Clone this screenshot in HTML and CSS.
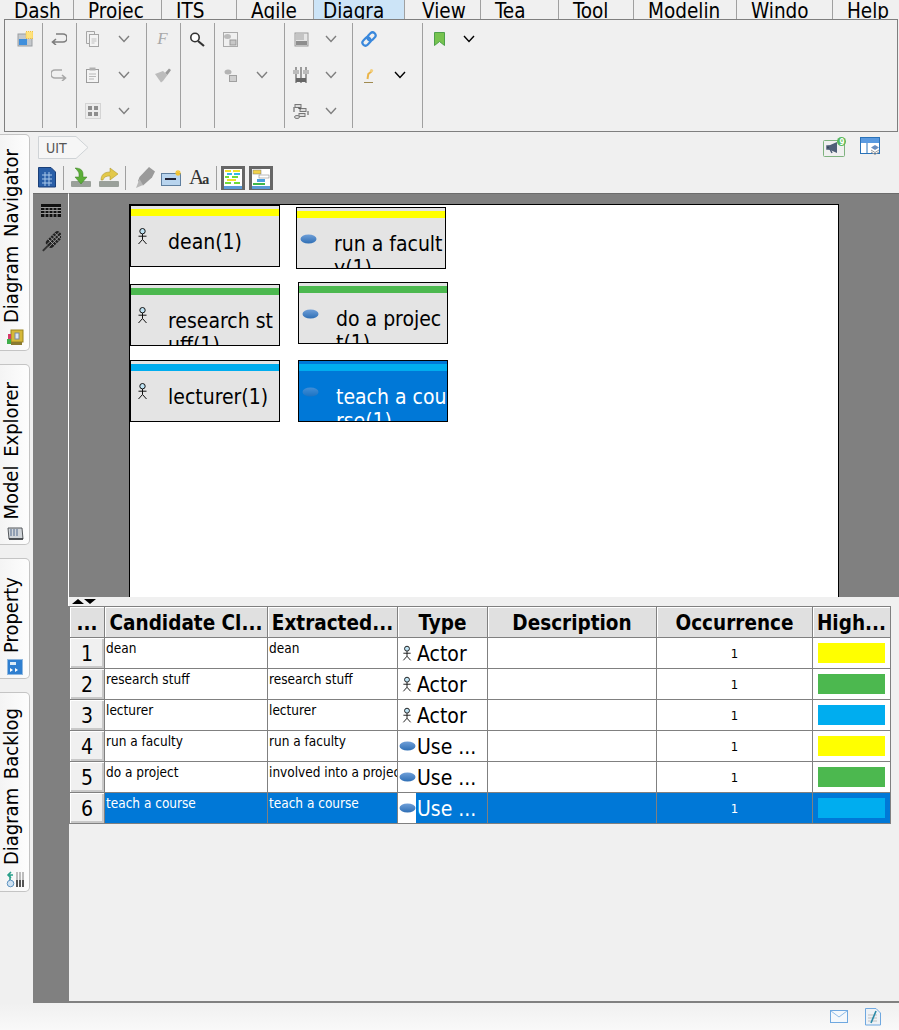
FILE: index.html
```html
<!DOCTYPE html>
<html lang="en">
<head>
  <meta charset="UTF-8">
  <title>Textual Analysis</title>
  <link rel="stylesheet" href="styles.css">
</head>
<body>
  <svg class="defs" width="0" height="0">
    <defs>
      <linearGradient id="ucFill" x1="0" y1="0" x2="0" y2="1">
        <stop offset="0" stop-color="#6f9fd8"/>
        <stop offset="1" stop-color="#2f6fb5"/>
      </linearGradient>
      <symbol id="actor" viewBox="0 0 11 17">
        <circle cx="5.5" cy="3.2" r="2.7" fill="#bfe4f5" stroke="#111"/>
        <path d="M5.5 6v5.5M1.5 8.2h8M5.5 11.5L1.5 16M5.5 11.5l4 4.5" fill="none" stroke="#111"/>
      </symbol>
      <symbol id="usecase" viewBox="0 0 17 10">
        <ellipse cx="8.5" cy="5" rx="8" ry="4.5" fill="url(#ucFill)"/>
      </symbol>
      <symbol id="chev" viewBox="0 0 12 8">
        <path d="M1 1l5 5.5L11 1" fill="none" stroke="currentColor" stroke-width="1.4"/>
      </symbol>
    </defs>
  </svg>

  <!-- menu -->
  <div class="menubar">
    <div class="menu">Dash</div>
    <div class="menu">Projec</div>
    <div class="menu">ITS</div>
    <div class="menu">Agile</div>
    <div class="menu active">Diagra</div>
    <div class="menu">View</div>
    <div class="menu">Tea</div>
    <div class="menu">Tool</div>
    <div class="menu">Modelin</div>
    <div class="menu">Windo</div>
    <div class="menu">Help</div>
  </div>

  <!-- ribbon -->
  <div class="toolbar">
    <div class="tb-group g-first">
      <div class="tb-row">
        <svg class="ico" width="16" height="16" viewBox="0 0 16 16"><rect x="1" y="3" width="14" height="12" fill="#c4c8cc" stroke="#9a9ea2"/><rect x="2" y="8" width="8" height="6" fill="#3f8fdc"/><rect x="9" y="0.5" width="7" height="7" fill="#ffe27a" stroke="#f0c040" stroke-dasharray="1 1"/></svg>
      </div>
    </div>
    <div class="tb-group g-narrow">
      <div class="tb-row">
        <svg class="ico" width="16" height="12" viewBox="0 0 16 12"><path d="M5 1H12a3.5 3.5 0 0 1 0 8H2M5 6L1.5 9 5 12" fill="none" stroke="#7d7d7d" stroke-width="1.6"/></svg>
      </div>
      <div class="tb-row">
        <svg class="ico" width="16" height="12" viewBox="0 0 16 12"><path d="M11 1H4a3.5 3.5 0 0 0 0 8H14M11 6l3.5 3L11 12" fill="none" stroke="#a8a8a8" stroke-width="1.6"/></svg>
      </div>
    </div>
    <div class="tb-group g-wide">
      <div class="tb-row">
        <svg class="ico" width="13" height="16" viewBox="0 0 13 16"><path d="M.5.500h8v3M.5.500v12h3" fill="none" stroke="#a6a6a6"/><rect x="3.5" y="3.500" width="9" height="12" fill="#f4f4f4" stroke="#a6a6a6"/><path d="M5.5 8h5M5.5 10h5M5.5 12h3" stroke="#c0c0c0"/></svg>
        <svg class="chev" width="12" height="8"><use href="#chev"/></svg>
      </div>
      <div class="tb-row">
        <svg class="ico" width="13" height="16" viewBox="0 0 13 16"><rect x=".5" y="2.500" width="12" height="13" fill="#f4f4f4" stroke="#9c9c9c"/><rect x="3.5" y=".5" width="6" height="3" fill="#b0b0b0"/><path d="M3 7h7M3 9.500h7M3 12h5" stroke="#b8b8b8"/></svg>
        <svg class="chev" width="12" height="8"><use href="#chev"/></svg>
      </div>
      <div class="tb-row">
        <svg class="ico" width="16" height="16" viewBox="0 0 16 16"><rect x=".5" y=".5" width="15" height="15" fill="#ececec" stroke="#d4d4d4"/><path d="M3 3h4v4H3zM9 3h4v4H9zM3 9h4v4H3zM9 9h4v4H9z" fill="#8e8e8e"/></svg>
        <svg class="chev" width="12" height="8"><use href="#chev"/></svg>
      </div>
    </div>
    <div class="tb-group g-narrow">
      <div class="tb-row"><span class="ico font-f">F</span></div>
      <div class="tb-row">
        <svg class="ico" width="16" height="15" viewBox="0 0 16 15"><path d="M10 5l4-4.500L16 2l-3.500 5z" fill="#9a9a9a"/><path d="M0 6l6 8.500 2-1.500 4.500-6L8 3z" fill="#bcbcbc"/></svg>
      </div>
    </div>
    <div class="tb-group g-narrow">
      <div class="tb-row">
        <svg class="ico" width="16" height="15" viewBox="0 0 16 15"><circle cx="6" cy="5.500" r="4.200" fill="#fff" stroke="#333" stroke-width="1.600"/><path d="M9 9l6 5" stroke="#333" stroke-width="2.200"/></svg>
      </div>
    </div>
    <div class="tb-group g-wide">
      <div class="tb-row">
        <svg class="ico" width="15" height="15" viewBox="0 0 15 15"><rect x=".5" y=".5" width="14" height="14" fill="none" stroke="#666" stroke-dasharray="1 1"/><ellipse cx="4.500" cy="4.500" rx="3.500" ry="2.500" fill="#bbb"/><rect x="7" y="8" width="6" height="5" fill="#c8c8c8" stroke="#999"/></svg>
      </div>
      <div class="tb-row">
        <svg class="ico" width="13" height="13" viewBox="0 0 13 13"><ellipse cx="4" cy="3" rx="3.500" ry="2.500" fill="#b4b4b4"/><rect x="5.500" y="6.500" width="7" height="6" fill="#cfcfcf" stroke="#a0a0a0"/></svg>
        <svg class="chev" width="12" height="8"><use href="#chev"/></svg>
      </div>
    </div>
    <div class="tb-group g-mid">
      <div class="tb-row">
        <svg class="ico" width="15" height="15" viewBox="0 0 15 15"><rect x="1" y="1" width="13" height="13" fill="#e6e6e6" stroke="#9a9a9a"/><rect x="2" y="2" width="8" height="6" fill="#c4c4c4"/><rect x="2" y="9" width="11" height="4" fill="#8e8e8e"/></svg>
        <svg class="chev" width="12" height="8"><use href="#chev"/></svg>
      </div>
      <div class="tb-row">
        <svg class="ico" width="16" height="16" viewBox="0 0 16 16"><path d="M3 0v16M8 0v16M13 0v16" stroke="#777" stroke-width="1.400"/><rect x="0" y="3" width="6" height="4" fill="#bbb"/><rect x="10" y="3" width="6" height="4" fill="#bbb"/><rect x="3" y="11" width="10" height="4" fill="#666"/></svg>
        <svg class="chev" width="12" height="8"><use href="#chev"/></svg>
      </div>
      <div class="tb-row">
        <svg class="ico" width="16" height="15" viewBox="0 0 16 15"><rect x="2" y=".5" width="6" height="3" fill="#ddd" stroke="#777"/><rect x="7" y="4.500" width="6" height="3" fill="#ddd" stroke="#777"/><rect x="6" y="9.500" width="6" height="3" fill="#ddd" stroke="#777"/><ellipse cx="4" cy="13" rx="2.500" ry="1.500" fill="#ddd" stroke="#777"/><path d="M1 3v5M15 7v4M5 4l3 1" stroke="#555"/></svg>
        <svg class="chev" width="12" height="8"><use href="#chev"/></svg>
      </div>
    </div>
    <div class="tb-group g-wide">
      <div class="tb-row">
        <svg class="ico" width="16" height="16" viewBox="0 0 16 16"><g transform="rotate(-45 8 8)" fill="none" stroke="#3a88dc" stroke-width="2.200"><rect x="0" y="5" width="9" height="6" rx="3"/><rect x="7" y="5" width="9" height="6" rx="3"/></g></svg>
      </div>
      <div class="tb-row">
        <svg class="ico" width="10" height="15" viewBox="0 0 10 15"><path d="M3.500 11l.8-5 3.700-3" fill="none" stroke="#eab54a" stroke-width="2"/><circle cx="7.500" cy="2.500" r="1.600" fill="#f3cf7f"/><path d="M0 14.500h9" stroke="#a08a50"/></svg>
        <svg class="chev dark" width="12" height="8"><use href="#chev"/></svg>
      </div>
    </div>
    <div class="tb-group g-last">
      <div class="tb-row">
        <svg class="ico" width="11" height="14" viewBox="0 0 11 14"><path d="M.5.500h10v13L5.500 9.500.5 13.500z" fill="#77c34f" stroke="#4da04a"/></svg>
        <svg class="chev dark" width="12" height="8"><use href="#chev"/></svg>
      </div>
    </div>
  </div>

  <div class="workspace">
    <!-- vertical tabs on the left -->
    <div class="side-tabs">
      <div class="side-tab tab-nav">
        <span class="side-label">Diagram Navigator</span>
        <svg width="18" height="18" viewBox="0 0 18 18"><rect x="5" y="1" width="12" height="12" fill="#d6b838" stroke="#9a8420"/><rect x="9" y="4" width="4" height="6" fill="#dbe6f0" stroke="#7a8aa0"/><rect x="2" y="5" width="3" height="5" fill="#d43a6a"/><rect x="1" y="10" width="4" height="5" fill="#3fae4a"/><rect x="5" y="13" width="11" height="3" fill="#8a7a30"/></svg>
      </div>
      <div class="side-tab tab-model">
        <span class="side-label">Model Explorer</span>
        <svg width="18" height="15" viewBox="0 0 18 15"><path d="M2 2h14l1 11H3z" fill="#d2d6da" stroke="#55595d"/><path d="M5 3v7M8 3v7M11 3v7" stroke="#7d8ea8" stroke-width="1.500"/><path d="M3 13h14" stroke="#33373b" stroke-width="1.500"/></svg>
      </div>
      <div class="side-tab tab-prop">
        <span class="side-label">Property</span>
        <svg width="16" height="16" viewBox="0 0 16 16"><rect x=".5" y=".5" width="15" height="15" fill="#2f7fd0" stroke="#8fb8e0"/><rect x="3" y="3" width="6" height="3" fill="#dcecf8"/><path d="M3 9l3 2-3 2zM8 9l3 2-3 2z" fill="#fff"/></svg>
      </div>
      <div class="side-tab tab-backlog">
        <span class="side-label">Diagram Backlog</span>
        <svg width="18" height="17" viewBox="0 0 18 17"><path d="M11 1v15M14 1v15M17 1v15" stroke="#bdbdbd" stroke-width="2"/><path d="M11 9v7M14 9v7M17 9v7" stroke="#555" stroke-width="2"/><circle cx="4.500" cy="12.500" r="3.300" fill="#cfe2f2" stroke="#5f93c0"/><path d="M4 9V4h3M5 1L2 4l3 3" fill="none" stroke="#2aa08a" stroke-width="1.600"/></svg>
      </div>
    </div>

    <div class="content">
      <div class="crumbs">
        <svg class="crumb" width="51" height="23" viewBox="0 0 51 23">
          <path d="M.5.500H38L50 11.500 38 22.500H.5z" fill="#f6f6f6" stroke="#cfd3d6"/>
          <text x="8" y="17" class="crumb-text">UIT</text>
        </svg>
        <div class="crumb-tools">
          <svg width="24" height="21" viewBox="0 0 24 21"><rect x=".5" y="3.500" width="21" height="16" rx="1" fill="#f0f0f0" stroke="#7fb27f"/><path d="M5 9l9-4v11L5 12z" fill="#4f5f78"/><path d="M4 9h2v3H4zM7 12l2 4" stroke="#4f5f78" stroke-width="1.500"/><circle cx="18.500" cy="4.500" r="4.500" fill="#55b85a"/><text x="16.500" y="7.500" class="badge">9</text></svg>
          <svg width="20" height="19" viewBox="0 0 20 19"><rect x=".5" y=".5" width="19" height="16" fill="#fff" stroke="#2a72b8"/><rect x="1" y="1" width="18" height="5" fill="#5a9ae0"/><path d="M7 6v10" stroke="#2a72b8"/><path d="M15 8l4 2.500-4 2.500-4-2.500z" fill="#6a8fc0"/><path d="M11 13l4 2.500 4-2.500M11 15l4 2.500 4-2.500" fill="none" stroke="#9a9a9a"/></svg>
        </div>
      </div>

      <div class="tools">
        <svg class="t-first" width="18" height="21" viewBox="0 0 18 21"><path d="M.5.500H13l4.500 4.500v15H.5z" fill="#2a5fa8" stroke="#1a3f78"/><path d="M4 8h10M4 12h10M4 16h10M7 5v14M11 5v14" stroke="#a8c8ea"/></svg>
        <span class="t-sep"></span>
        <svg width="20" height="21" viewBox="0 0 20 21"><rect x="0" y="14" width="20" height="6" rx="1" fill="#9aa09a"/><path d="M4 1c5 0 8 2 8 6v3h4l-6 7-6-7h4V7c0-2-2-4-4-6z" fill="#5cae38" stroke="#3d7f26" stroke-width=".5"/></svg>
        <svg class="t-gap" width="20" height="21" viewBox="0 0 20 21"><rect x="0" y="14" width="20" height="6" rx="1" fill="#9aa09a"/><path d="M2 13c0-5 3-8 9-8V1l8 6-8 6V9c-4 0-6 1-7 4z" fill="#e2c84a" stroke="#a68f20" stroke-width=".5"/></svg>
        <span class="t-sep t-sep2"></span>
        <svg class="t-pen" width="19" height="21" viewBox="0 0 19 21"><path d="M13 0l6 4.500-3 6-9 8-3-2.500-2-2 1.500-4z" fill="#9a9a9a"/><path d="M3.500 12L0 21l7-3z" fill="#b8b8b8"/></svg>
        <svg class="t-gap6" width="21" height="17" viewBox="0 0 21 17"><rect x=".5" y="4.500" width="19" height="12" fill="#b8d4ee" stroke="#5f7f9f"/><path d="M4 10h11" stroke="#223" stroke-width="2"/><path d="M17 1v6M14 4h6M15 2l4 4M19 2l-4 4" stroke="#f4c430" stroke-width="1.200"/></svg>
        <span class="t-font"><span class="t-font-a">A</span><span class="t-font-b">a</span></span>
        <span class="t-sep t-sep3"></span>
        <span class="t-toggle">
          <svg width="18" height="20" viewBox="0 0 18 20"><rect width="18" height="20" fill="#fff"/><path d="M1 1h6v2H1zM9 1h7v2H9z" fill="#f2e22a"/><path d="M3 4h5v2H3zM10 4h6v2h-6z" fill="#35b8e8"/><path d="M1 7h4v2H1zM8 7h6v2H8z" fill="#6fdc3a"/><path d="M3 10h9v2H3z" fill="#f2e22a"/><path d="M1 13h6v2H1zM10 13h6v2h-6z" fill="#6fdc3a"/><rect y="17" width="18" height="3" fill="#5a9ad8"/></svg>
        </span>
        <span class="t-toggle t-toggle2">
          <svg width="18" height="20" viewBox="0 0 18 20"><rect width="18" height="20" fill="#fff"/><rect x="1" y="1" width="8" height="4" fill="#f2d24a" stroke="#777" stroke-width=".5"/><rect x="7" y="6" width="10" height="3" fill="#fff" stroke="#777" stroke-width=".5"/><rect x="5" y="10" width="8" height="3" fill="#4aa0e0"/><rect x="1" y="14" width="12" height="2" fill="#3fb84a"/><rect y="17" width="18" height="3" fill="#5a9ad8"/></svg>
        </span>
      </div>

      <div class="editor">
        <div class="palette">
          <svg width="20" height="13" viewBox="0 0 20 13"><rect width="20" height="13" fill="#111"/><path d="M0 3.500h20M0 6.500h20M0 9.500h20M4 3v10M8 3v10M12 3v10M16 3v10" stroke="#999"/></svg>
          <svg width="20" height="22" viewBox="0 0 20 22"><g transform="rotate(45 10 11)"><rect x="6" y="-2" width="9" height="18" rx="3" fill="#222"/><path d="M6 2h9M6 5h9M6 8h9M6 11h9M9 -2v18M12 -2v18" stroke="#aaa" stroke-width=".8"/><path d="M10.500 16v7" stroke="#333" stroke-width="2"/></g></svg>
        </div>
        <div class="stage">
          <div class="canvas-wrap">
            <div class="canvas">
              <div class="node n-dean"><div class="node-bar bar-yellow"></div><svg class="node-actor"><use href="#actor"/></svg><div class="node-text">dean(1)</div></div>
              <div class="node n-run"><div class="node-bar bar-yellow"></div><svg class="node-uc"><use href="#usecase"/></svg><div class="node-text">run a faculty(1)</div></div>
              <div class="node n-research"><div class="node-bar bar-green"></div><svg class="node-actor"><use href="#actor"/></svg><div class="node-text">research stuff(1)</div></div>
              <div class="node n-project"><div class="node-bar bar-green"></div><svg class="node-uc"><use href="#usecase"/></svg><div class="node-text">do a project(1)</div></div>
              <div class="node n-lecturer"><div class="node-bar bar-blue"></div><svg class="node-actor"><use href="#actor"/></svg><div class="node-text">lecturer(1)</div></div>
              <div class="node n-teach selected"><div class="node-bar bar-blue"></div><svg class="node-uc"><use href="#usecase"/></svg><div class="node-text">teach a course(1)</div></div>
            </div>
          </div>
          <div class="splitter"><span class="arrow-up"></span><span class="arrow-down"></span></div>
          <div class="table-pane">
            <table class="grid">
              <colgroup>
                <col class="c-num"><col class="c-name"><col class="c-ext"><col class="c-type"><col class="c-desc"><col class="c-occ"><col class="c-high">
              </colgroup>
              <thead>
                <tr><th>...</th><th>Candidate Cl...</th><th>Extracted...</th><th>Type</th><th>Description</th><th>Occurrence</th><th>High...</th></tr>
              </thead>
              <tbody>
                <tr>
                  <th class="row-head">1</th><td>dean</td><td>dean</td>
                  <td class="type"><div class="type-cell"><span class="type-ico"><svg class="ico-actor"><use href="#actor"/></svg></span><span class="type-name">Actor</span></div></td>
                  <td></td><td class="occ">1</td><td class="high"><div class="swatch bar-yellow"></div></td>
                </tr>
                <tr>
                  <th class="row-head">2</th><td>research stuff</td><td>research stuff</td>
                  <td class="type"><div class="type-cell"><span class="type-ico"><svg class="ico-actor"><use href="#actor"/></svg></span><span class="type-name">Actor</span></div></td>
                  <td></td><td class="occ">1</td><td class="high"><div class="swatch bar-green"></div></td>
                </tr>
                <tr>
                  <th class="row-head">3</th><td>lecturer</td><td>lecturer</td>
                  <td class="type"><div class="type-cell"><span class="type-ico"><svg class="ico-actor"><use href="#actor"/></svg></span><span class="type-name">Actor</span></div></td>
                  <td></td><td class="occ">1</td><td class="high"><div class="swatch bar-blue"></div></td>
                </tr>
                <tr>
                  <th class="row-head">4</th><td>run a faculty</td><td>run a faculty</td>
                  <td class="type"><div class="type-cell"><span class="type-ico"><svg class="ico-uc"><use href="#usecase"/></svg></span><span class="type-name">Use ...</span></div></td>
                  <td></td><td class="occ">1</td><td class="high"><div class="swatch bar-yellow"></div></td>
                </tr>
                <tr>
                  <th class="row-head">5</th><td>do a project</td><td><div class="clip">involved into a project</div></td>
                  <td class="type"><div class="type-cell"><span class="type-ico"><svg class="ico-uc"><use href="#usecase"/></svg></span><span class="type-name">Use ...</span></div></td>
                  <td></td><td class="occ">1</td><td class="high"><div class="swatch bar-green"></div></td>
                </tr>
                <tr class="selected">
                  <th class="row-head">6</th><td>teach a course</td><td>teach a course</td>
                  <td class="type"><div class="type-cell"><span class="type-ico"><svg class="ico-uc"><use href="#usecase"/></svg></span><span class="type-name">Use ...</span></div></td>
                  <td></td><td class="occ">1</td><td class="high"><div class="swatch bar-blue"></div></td>
                </tr>
              </tbody>
            </table>
          </div>
        </div>
      </div>
    </div>
  </div>

  <div class="statusbar">
    <svg width="18" height="13" viewBox="0 0 18 13"><rect x=".5" y=".5" width="17" height="12" fill="#f4f8fc" stroke="#6fa8e0"/><path d="M1 1l8 6 8-6" fill="none" stroke="#8fbce8"/></svg>
    <svg width="16" height="18" viewBox="0 0 16 18"><path d="M.5.500H11l4.500 4.500v12H.5z" fill="#eef2f6" stroke="#6fa8e0"/><path d="M3 7h9M3 10h9M3 13h9" stroke="#c0c0c0"/><path d="M11 3L6 15" stroke="#2a8aa8" stroke-width="1.600"/></svg>
  </div>
</body>
</html>
```

FILE: styles.css
```css
html, body {
  margin: 0;
  padding: 0;
}
body {
  width: 899px;
  height: 1030px;
  overflow: hidden;
  display: flex;
  flex-direction: column;
  background-color: #f0f0f0;
  color: #000;
  font-family: "DejaVu Sans Condensed", "DejaVu Sans", sans-serif;
}
.defs {
  position: absolute;
}

/* menu */
.menubar {
  height: 19px;
  flex: none;
  display: grid;
  grid-template-columns: 74px 88px 75px 77px 94px 73px 78px 75px 103px 96px 66px;
  overflow: hidden;
}
.menu {
  height: 19px;
  padding-left: 14px;
  box-sizing: border-box;
  font-size: 20.5px;
  line-height: 22px;
  border-right: 1px solid #a0a0a0;
  overflow: hidden;
  white-space: nowrap;
}
.menu:last-child {
  border-right: 0;
}
.menu.active {
  margin-right: 3px;
  padding-left: 9px;
  background-color: #cce4f7;
}

/* ribbon */
.toolbar {
  height: 113px;
  flex: none;
  margin-left: 4px;
  margin-right: 1px;
  padding: 3px 0;
  box-sizing: border-box;
  display: flex;
  border: 1px solid #7f7f7f;
}
.tb-group {
  width: 70px;
  flex: none;
  box-sizing: border-box;
  border-right: 1px solid #a0a0a0;
}
.g-first {
  width: 38px;
  padding-left: 4px;
}
.g-narrow {
  width: 34px;
}
.g-mid {
  width: 68px;
}
.g-last {
  border-right: 0;
}
.tb-row {
  height: 36px;
  display: grid;
  grid-template-columns: 31px 32px;
  align-items: center;
  justify-items: center;
  color: #7f7f7f;
  transform: translateY(-2px);
}
.g-mid .tb-row,
.g-last .tb-row {
  grid-template-columns: 32px 27px;
}
.chev.dark {
  color: #000;
}
.font-f {
  font-family: "Liberation Serif", serif;
  font-style: italic;
  font-size: 17px;
  color: #a8a8a8;
}

/* left tabs */
.workspace {
  flex: 1;
  min-height: 0;
  display: flex;
}
.side-tabs {
  width: 33px;
  flex: none;
  padding-top: 2px;
  box-sizing: border-box;
}
.side-tab {
  width: 30px;
  box-sizing: border-box;
  margin-bottom: 13px;
  padding-bottom: 3px;
  display: flex;
  flex-direction: column;
  align-items: center;
  justify-content: flex-end;
  gap: 6px;
  background: linear-gradient(to right, #f4f4f4, #fdfdfd);
  border: 1px solid #c4c4c4;
  border-left: 0;
  border-radius: 0 5px 5px 0;
}
.side-label {
  align-self: flex-start;
  writing-mode: vertical-rl;
  transform: rotate(180deg);
  font-size: 20px;
  line-height: 22px;
  word-spacing: 3px;
  white-space: nowrap;
}
.tab-nav {
  height: 217px;
}
.tab-model {
  height: 181px;
}
.tab-prop {
  height: 121px;
}
.tab-backlog {
  height: 200px;
}

.content {
  flex: 1;
  min-width: 0;
  display: flex;
  flex-direction: column;
}
.crumbs {
  height: 33px;
  flex: none;
  padding: 4px 19px 0 5px;
  box-sizing: border-box;
  display: flex;
  justify-content: space-between;
  align-items: flex-start;
}
.crumb-text {
  font-size: 14px;
  fill: #555;
}
.crumb-tools {
  display: flex;
  gap: 13px;
  padding-top: 1px;
}
.badge {
  font-size: 8px;
  font-weight: bold;
  fill: #fff;
}

.tools {
  height: 28px;
  flex: none;
  padding: 1px 0 0 5px;
  box-sizing: border-box;
  display: flex;
  align-items: flex-start;
}
.tools > svg {
  margin-top: 1px;
}
.t-sep {
  width: 1px;
  height: 24px;
  margin: 0 7px 0 7px;
  background-color: #a0a0a0;
}
.t-gap {
  margin-left: 8px;
}
.t-sep2 {
  margin: 0 10px 0 6px;
}
.tools > .t-gap6 {
  margin-left: 6px;
  margin-top: 3px;
}
.t-font {
  margin-left: 7px;
  width: 20px;
  height: 22px;
  font-family: "Liberation Serif", serif;
  color: #333;
  white-space: nowrap;
  line-height: 22px;
}
.t-font-a {
  font-size: 21px;
}
.t-font-b {
  font-size: 14px;
  font-weight: bold;
  margin-left: -2px;
}
.t-sep3 {
  margin: 0 4px 0 7px;
}
.t-toggle {
  width: 24px;
  height: 24px;
  box-sizing: border-box;
  padding-top: 3px;
  display: flex;
  justify-content: center;
  background-color: #666;
  overflow: hidden;
}
.t-toggle2 {
  margin-left: 4px;
}

/* diagram and table */
.editor {
  flex: 1;
  min-height: 0;
  display: flex;
}
.palette {
  width: 35px;
  flex: none;
  padding-top: 10px;
  box-sizing: border-box;
  display: flex;
  flex-direction: column;
  align-items: center;
  gap: 14px;
  background-color: #808080;
  border-top: 1px solid #6c6c6c;
}
.stage {
  flex: 1;
  min-width: 0;
  display: flex;
  flex-direction: column;
  border-bottom: 2px solid #808080;
}
.canvas-wrap {
  height: 404px;
  flex: none;
  padding: 10px 60px 0 60px;
  box-sizing: border-box;
  display: flex;
  background-color: #808080;
  border-top: 1px solid #6c6c6c;
  border-left: 1px solid #fff;
}
.canvas {
  flex: 1;
  position: relative;
  background-color: #fff;
  border: 1px solid #000;
  border-bottom: 0;
}
.node {
  position: absolute;
  width: 150px;
  height: 62px;
  box-sizing: border-box;
  padding-top: 3px;
  overflow: hidden;
  background-color: #e4e4e4;
  border: 1px solid #000;
}
.n-dean { left: 0; top: 0; }
.n-run { left: 166px; top: 2px; }
.n-research { left: 0; top: 79px; }
.n-project { left: 168px; top: 77px; }
.n-lecturer { left: 0; top: 155px; }
.n-teach { left: 168px; top: 155px; }
.node.selected {
  background-color: #0078d7;
  color: #fff;
}
.node-bar {
  height: 7px;
}
.bar-yellow {
  background-color: #ffff00;
}
.bar-green {
  background-color: #4cb84f;
}
.bar-blue {
  background-color: #00adef;
}
.node-actor {
  position: absolute;
  left: 6px;
  top: 22px;
  width: 11px;
  height: 17px;
}
.node-uc {
  position: absolute;
  left: 3px;
  top: 26px;
  width: 17px;
  height: 10px;
}
.node.selected .node-uc {
  opacity: 0.6;
}
.node-text {
  width: 111px;
  margin: 14px 0 0 37px;
  font-size: 21px;
  line-height: 24px;
  word-break: break-all;
}
.splitter {
  height: 9px;
  flex: none;
  padding: 2px 0 0 3px;
  box-sizing: border-box;
  display: flex;
  background-color: #f0f0f0;
  border-left: 1px solid #fff;
}
.arrow-up {
  border-left: 6px solid transparent;
  border-right: 6px solid transparent;
  border-bottom: 5px solid #000;
  height: 0;
}
.arrow-down {
  border-left: 6px solid transparent;
  border-right: 6px solid transparent;
  border-top: 5px solid #000;
  height: 0;
}
.table-pane {
  flex: 1;
  min-height: 0;
  background-color: #f0f0f0;
  border-left: 1px solid #808080;
}
.grid {
  width: 822px;
  table-layout: fixed;
  border-collapse: collapse;
  background-color: #fff;
}
.c-num { width: 35px; }
.c-name { width: 163px; }
.c-ext { width: 130px; }
.c-type { width: 90px; }
.c-desc { width: 169px; }
.c-occ { width: 156px; }
.c-high { width: 78px; }
.grid th,
.grid td {
  height: 31px;
  padding: 0;
  box-sizing: border-box;
  border: 1px solid #808080;
  overflow: hidden;
  white-space: nowrap;
}
.grid th {
  padding-top: 1px;
  font-size: 20.5px;
  font-weight: bold;
  background-color: #e0e0e0;
  box-shadow: inset 1px 1px 0 #fff;
}
.grid .row-head {
  font-size: 21px;
  font-weight: normal;
  background-color: #f0f0f0;
  box-shadow: inset 1px 1px 0 #fff, inset -2px -2px 0 #c8c8c8;
}
.grid td {
  padding: 2px 0 0 1px;
  vertical-align: top;
  font-size: 13.5px;
  line-height: 16px;
}
.clip {
  overflow: hidden;
}
.grid .occ {
  vertical-align: middle;
  text-align: center;
  padding: 2px 0 0;
  font-size: 13px;
}
.grid .high {
  padding: 5px;
}
.swatch {
  height: 20px;
}
.grid .type {
  padding: 0;
}
.type-cell {
  height: 30px;
  display: flex;
  font-size: 21px;
  line-height: 32px;
}
.type-ico {
  width: 18px;
  flex: none;
  display: flex;
  align-items: center;
  justify-content: center;
  background-color: #fff;
}
.type-name {
  padding-left: 1px;
}
.ico-actor {
  width: 10px;
  height: 17px;
}
.ico-uc {
  width: 17px;
  height: 10px;
}
.grid .selected td {
  background-color: #0078d7;
  color: #fff;
}
.statusbar {
  height: 27px;
  flex: none;
  padding-right: 18px;
  box-sizing: border-box;
  display: flex;
  justify-content: flex-end;
  align-items: center;
  gap: 17px;
  background: linear-gradient(to bottom, #f0f0f0, #f9f9f9);
}
```
